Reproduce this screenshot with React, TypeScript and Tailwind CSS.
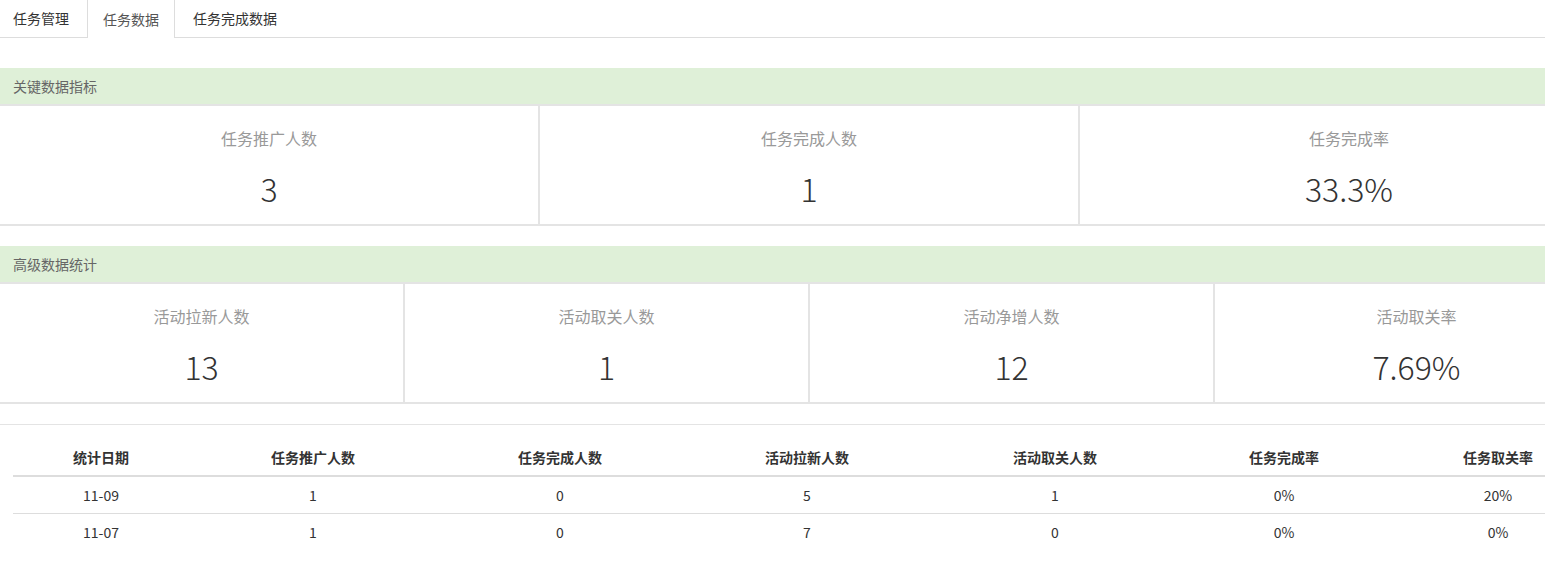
import React from "react";

const font = { fontFamily: '"Noto Sans CJK SC", "Microsoft YaHei", sans-serif' };

function SectionHeader({ title }: { title: string }) {
  return (
    <div className="h-[38px] bg-[#dff0d8] border-b-2 border-[#e4e4e4] pl-[13px] flex items-center text-[14px] text-[#666]">
      {title}
    </div>
  );
}

function Stat({ label, value }: { label: string; value: string }) {
  return (
    <div className="flex-1 border-r-2 border-[#e4e4e4] flex flex-col items-center pt-[21px] pb-[16px]">
      <div className="text-[16px] leading-[22px] text-[#999]">{label}</div>
      <div className="mt-[19px] text-[32px] leading-[40px] text-[#333] font-light">{value}</div>
    </div>
  );
}

const cols = [
  { t: "统计日期", w: "w-[176px]" },
  { t: "任务推广人数", w: "w-[248px]" },
  { t: "任务完成人数", w: "w-[246px]" },
  { t: "活动拉新人数", w: "w-[248px]" },
  { t: "活动取关人数", w: "w-[248px]" },
  { t: "任务完成率", w: "w-[210px]" },
  { t: "任务取关率", w: "w-[218px]" },
];

const rows = [
  ["11-09", "1", "0", "5", "1", "0%", "20%"],
  ["11-07", "1", "0", "7", "0", "0%", "0%"],
];

export default function App() {
  return (
    <div className="w-full overflow-hidden bg-white" style={font}>
      <div className="w-[1620px]">
        {/* Tabs */}
        <div className="flex h-[38px] border-b border-[#ddd] text-[14px]">
          <div className="w-[87px] pl-[13px] flex items-center text-[#333]">任务管理</div>
          <div className="w-[88px] h-[38px] pl-[15px] flex items-center border-l border-r border-[#ddd] bg-white text-[#555]">
            任务数据
          </div>
          <div className="pl-[18px] flex items-center text-[#333]">任务完成数据</div>
        </div>

        <div className="mt-[30px]">
          <SectionHeader title="关键数据指标" />
          <div className="flex border-b-2 border-[#e4e4e4]">
            <Stat label="任务推广人数" value="3" />
            <Stat label="任务完成人数" value="1" />
            <Stat label="任务完成率" value="33.3%" />
          </div>
        </div>

        <div className="mt-[20px]">
          <SectionHeader title="高级数据统计" />
          <div className="flex border-b-2 border-[#e4e4e4]">
            <Stat label="活动拉新人数" value="13" />
            <Stat label="活动取关人数" value="1" />
            <Stat label="活动净增人数" value="12" />
            <Stat label="活动取关率" value="7.69%" />
          </div>
        </div>

        <div className="mt-[20px] border-t border-[#e4e4e4] px-[13px] pt-[14px]">
          <table className="w-full table-fixed border-collapse text-[14px] text-[#333]">
            <thead>
              <tr>
                {cols.map((c) => (
                  <th
                    key={c.t}
                    className={`${c.w} py-[8px] leading-[20px] font-bold text-center border-b-2 border-[#ddd]`}
                  >
                    {c.t}
                  </th>
                ))}
              </tr>
            </thead>
            <tbody>
              {rows.map((r, i) => (
                <tr key={i} className={i === 0 ? "border-b border-[#ddd]" : ""}>
                  {r.map((v, j) => (
                    <td key={j} className="py-[8px] leading-[20px] text-center">
                      {v}
                    </td>
                  ))}
                </tr>
              ))}
            </tbody>
          </table>
        </div>
      </div>
    </div>
  );
}
